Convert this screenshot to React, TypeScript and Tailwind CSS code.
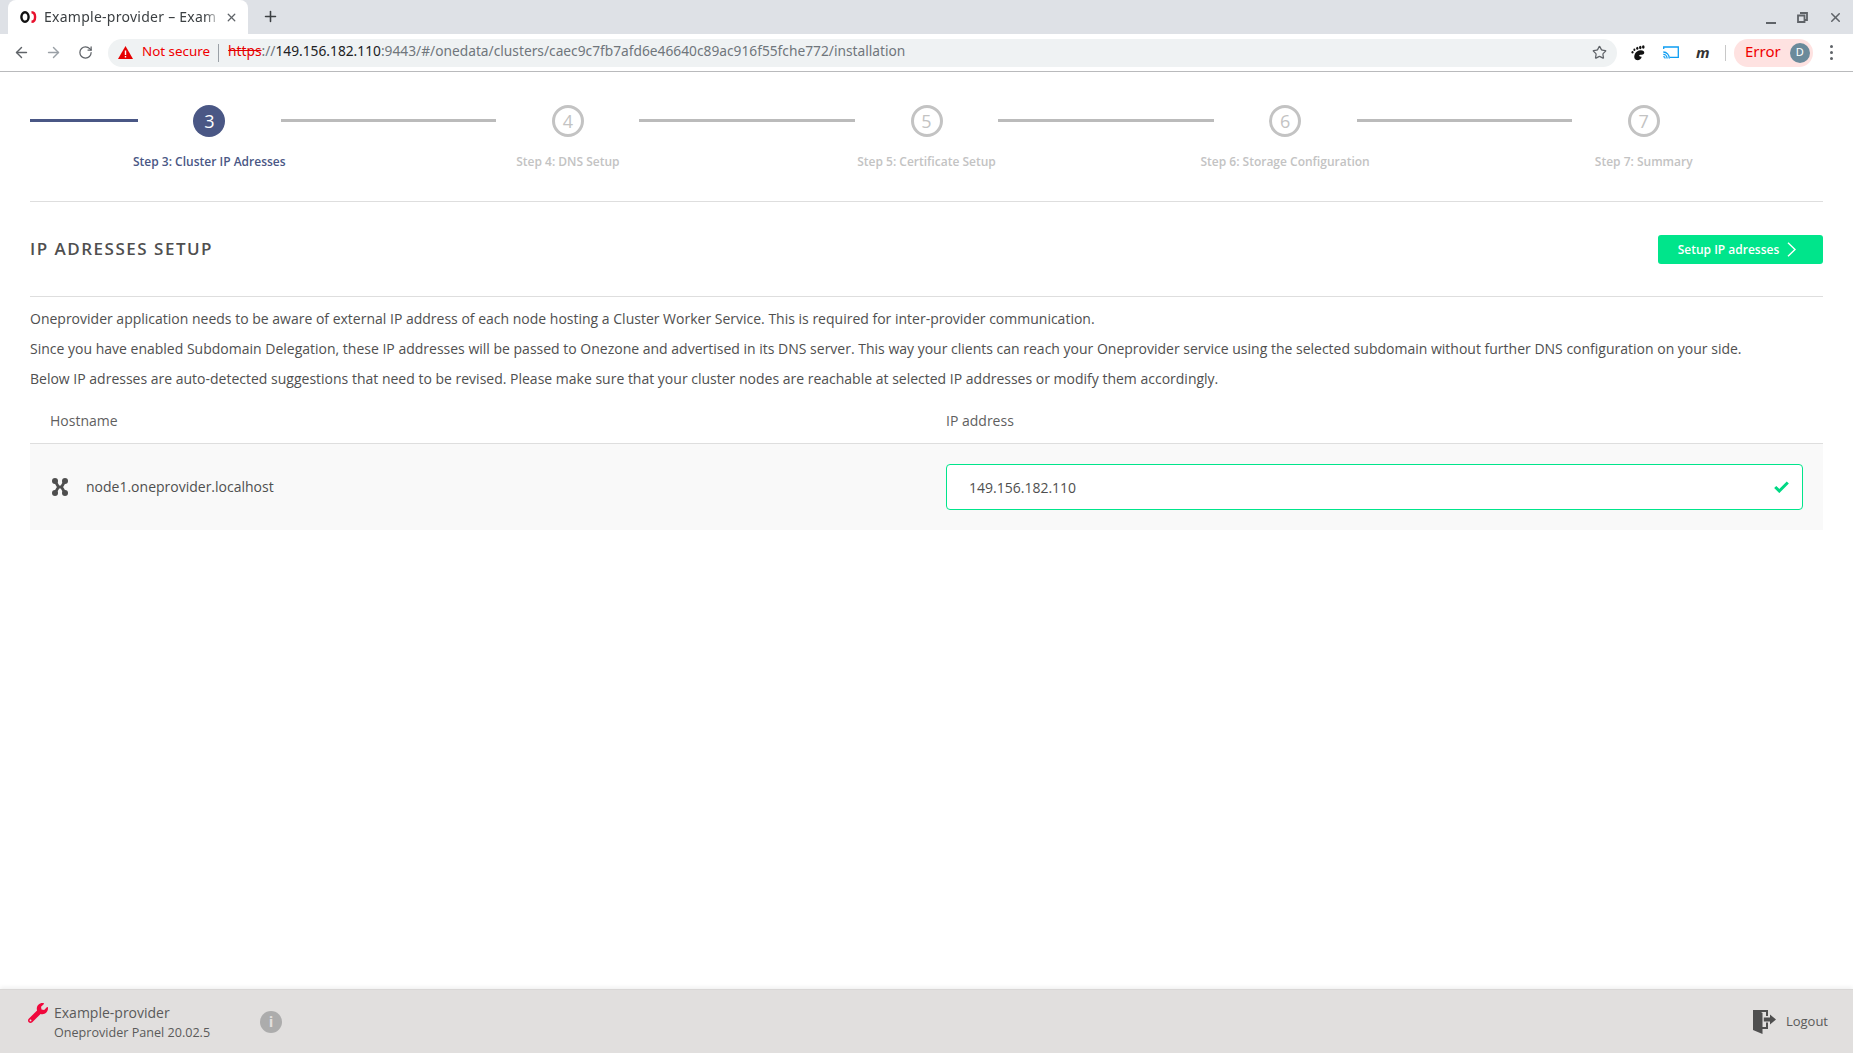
import React from "react";
import { ArrowLeft, ArrowRight, RotateCw, Star, X, Plus } from "lucide-react";
import { FaWrench } from "react-icons/fa";

const steps = [
  { n: 3, label: "Step 3: Cluster IP Adresses", active: true },
  { n: 4, label: "Step 4: DNS Setup" },
  { n: 5, label: "Step 5: Certificate Setup" },
  { n: 6, label: "Step 6: Storage Configuration" },
  { n: 7, label: "Step 7: Summary" },
];

function Step({ n, label, active, last }: { n: number; label: string; active?: boolean; last?: boolean }) {
  return (
    <div className="flex flex-col items-center">
      <div className="flex h-[32px] w-full items-center">
        <div className={active ? "h-[3px] flex-1 -translate-y-[1px] bg-[#4a5785]" : "h-[3px] flex-1 -translate-y-[1px] bg-[#bbbbbb]"} />
        <div className="flex w-[143px] justify-center">
          {active ? (
            <div className="flex h-[32px] w-[32px] items-center justify-center rounded-full bg-[#4a5785] text-[18px] text-white">{n}</div>
          ) : (
            <div className="flex h-[32px] w-[32px] items-center justify-center rounded-full border-[3px] border-[#c3c3c3] text-[18px] text-[#c3c3c3]">{n}</div>
          )}
        </div>
        <div className={last ? "h-[3px] flex-1" : "h-[3px] flex-1 -translate-y-[1px] bg-[#bbbbbb]"} />
      </div>
      <div className={active ? "mt-[16px] text-[12px] leading-[17px] font-semibold text-[#4a5785]" : "mt-[16px] text-[12px] leading-[17px] font-semibold text-[#c3c3c3]"}>{label}</div>
    </div>
  );
}

function Favicon() {
  return (
    <svg width="17" height="14" viewBox="0 0 17 14" fill="none">
      <ellipse cx="5" cy="7" rx="3.6" ry="4.8" stroke="#111" strokeWidth="2.4" />
      <path d="M11.5 2.2c2.6 0 3.6 2.2 3.6 4.8s-1 4.8-3.6 4.8" stroke="#e8112d" strokeWidth="2.4" />
    </svg>
  );
}

function Foot() {
  return (
    <svg width="14" height="16" viewBox="0 0 14 16" fill="#111">
      <path d="M6 6.500c2-1.400 5-1.500 6.500-.5 1.300 1 .9 3.200-.7 3.600-1.400.4-3.200.2-3.600 1-.4.800 1.200 1.300 2.500 1.100-.4 2.400-3 4-5.200 3.300C2.500 14.200 2.400 9.200 6 6.500z" />
      <ellipse cx="12.300" cy="2" rx="1.300" ry="1.700" />
      <ellipse cx="9.300" cy="2.500" rx="1.200" ry="1.700" />
      <ellipse cx="6.300" cy="3.300" rx="1.100" ry="1.500" />
      <ellipse cx="3.400" cy="4.800" rx="1" ry="1.300" />
      <ellipse cx="1.500" cy="7.200" rx="1" ry="1.200" />
    </svg>
  );
}

function Cast() {
  return (
    <svg width="16" height="13" viewBox="0 0 16 13" fill="none" stroke="#0d9df2" strokeWidth="1.3">
      <path d="M.7 3V1h14.600v10.400H7" />
      <path d="M.3 6c3.400 0 6 2.800 6 6.400M.3 8.400c2.200 0 3.800 1.800 3.800 4M.3 10.600c1 0 1.800.8 1.800 1.800" />
    </svg>
  );
}

function NodeIcon() {
  return (
    <svg width="16" height="18" viewBox="0 0 16 18" fill="#4f4f4f">
      <circle cx="3" cy="3" r="3" />
      <circle cx="13" cy="3" r="3" />
      <circle cx="3" cy="15" r="3" />
      <circle cx="13" cy="15" r="3" />
      <path d="M3 3 L6.500 9 L3 15 M13 3 L9.500 9 L13 15 M6.500 9 H9.500" stroke="#4f4f4f" strokeWidth="2.800" fill="none" />
    </svg>
  );
}

function LogoutIcon() {
  return (
    <svg width="23" height="24" viewBox="0 0 23 24" fill="#4f4f4f">
      <path d="M0 0H15V6H13V2H8L9.500 3V17H13V12.500H15V19H9.500V24L0 20Z" />
      <path d="M10.800 7.500H17V4.500L23 9.500L17 14.500V11.500H10.800Z" />
    </svg>
  );
}

export default function App() {
  return (
    <div className="flex h-[1053px] w-full flex-col overflow-hidden bg-white font-['Open_Sans',sans-serif] text-[#4f4f4f]">
      {/* tab strip */}
      <div className="flex h-[34px] items-end bg-[#dee1e6] font-['Noto_Sans',sans-serif]">
        <div className="ml-[8px] flex h-[34px] w-[240px] items-center rounded-t-[8px] bg-white pl-[12px]">
          <Favicon />
          <span className="ml-[7px] w-[178px] -translate-y-[1px] overflow-hidden text-[14px] tracking-[0.26px] whitespace-nowrap text-[#3c4043] [mask-image:linear-gradient(to_right,black_90%,transparent)]">Example-provider – Exam</span>
          <X size={13} strokeWidth={2.4} className="ml-[3px] text-[#5f6368]" />
        </div>
        <Plus size={17} strokeWidth={2.2} className="mb-[9px] ml-[14px] text-[#3c4043]" />
        <div className="mb-[9px] ml-auto flex items-center">
          <span className="h-[2px] w-[10px] translate-y-[5px] bg-[#5f6368]" />
          <svg width="11" height="11" viewBox="0 0 11 11" fill="none" stroke="#5f6368" strokeWidth="1.8" className="ml-[21px]">
            <path d="M3 1h7v7H8M1 3.500h6.500V10H1z" />
          </svg>
          <X size={15} strokeWidth={2.4} className="mr-[10px] ml-[20px] text-[#5f6368]" />
        </div>
      </div>
      {/* toolbar */}
      <div className="flex h-[38px] items-center border-b border-[#b9babc] bg-white font-['Noto_Sans',sans-serif]">
        <ArrowLeft size={17} strokeWidth={2} className="ml-[13px] text-[#5f6368]" />
        <ArrowRight size={17} strokeWidth={2} className="ml-[15px] text-[#9aa0a6]" />
        <RotateCw size={15} strokeWidth={2} className="ml-[16px] text-[#5f6368]" />
        <div className="ml-[15px] flex h-[28px] w-[1509px] items-center rounded-full bg-[#eff2f3] pl-[10px] text-[13.75px]">
          <svg width="15" height="13" viewBox="0 0 15 13">
            <path d="M7.500 0 15 13H0z" fill="#e60000" />
            <path d="M6.800 4.500h1.400v4.500H6.800zM6.800 10h1.400v1.400H6.800z" fill="#fff" />
          </svg>
          <span className="ml-[9px] -translate-y-[1px] text-[13.4px] text-[#f00000]">Not secure</span>
          <span className="mr-[9px] ml-[8px] h-[18px] w-px bg-[#9aa0a6]" />
          <div className="-translate-y-[1px] whitespace-nowrap">
            <span className="text-[#e60000] line-through">https</span>
            <span className="text-[#70767c]">://</span>
            <span className="text-[#202124]">149.156.182.110</span>
            <span className="text-[#70767c]">:9443/#/onedata/clusters/caec9c7fb7afd6e46640c89ac916f55fche772/installation</span>
          </div>
          <Star size={15} strokeWidth={2} className="mr-[10px] ml-auto text-[#5f6368]" />
        </div>
        <div className="ml-[14px]"><Foot /></div>
        <div className="ml-[18px]"><Cast /></div>
        <span className="ml-[17px] w-[16px] text-[15px] font-bold text-[#333] italic">m</span>
        <span className="ml-[13px] h-[16px] w-px bg-[#c8c8c8]" />
        <div className="ml-[8px] flex h-[28px] w-[79px] items-center rounded-full bg-[#fee2e1] pl-[11px] text-[15px] text-[#f00000]">
          <span className="-translate-y-[1px]">Error</span>
          <span className="ml-[9px] flex h-[20px] w-[20px] items-center justify-center rounded-full bg-[#6b8a9b] text-[11px] text-white">D</span>
        </div>
        <div className="ml-[17px] flex flex-col gap-[3px]">
          <span className="h-[3px] w-[3px] rounded-full bg-[#5f6368]" />
          <span className="h-[3px] w-[3px] rounded-full bg-[#5f6368]" />
          <span className="h-[3px] w-[3px] rounded-full bg-[#5f6368]" />
        </div>
      </div>
      {/* content */}
      <main className="flex flex-1 flex-col px-[30px]">
        <div className="grid h-[130px] grid-cols-5 border-b border-[#dedede] pt-[33px]">
          {steps.map((s, i) => (
            <Step key={s.n} n={s.n} label={s.label} active={s.active} last={i === steps.length - 1} />
          ))}
        </div>
        <div className="flex h-[95px] items-center justify-between border-b border-[#dedede]">
          <h1 className="text-[17px] font-semibold tracking-[1.5px] text-[#4f4f4f]">IP ADRESSES SETUP</h1>
          <button className="flex h-[29px] w-[165px] items-center justify-center gap-[8px] rounded-[3px] bg-[#00e58b] pr-[7px] text-[12px] font-semibold text-white">
            <span className="translate-y-[1px]">Setup IP adresses</span>
            <svg width="9" height="15" viewBox="0 0 9 15" fill="none" stroke="#fff" strokeWidth="1.4"><path d="M1 .700 8 7.500 1 14.300" /></svg>
          </button>
        </div>
        <div className="pt-[7px] text-[14px] leading-[30px] text-[#4f4f4f]">
          <p>Oneprovider application needs to be aware of external IP address of each node hosting a Cluster Worker Service. This is required for inter-provider communication.</p>
          <p>Since you have enabled Subdomain Delegation, these IP addresses will be passed to Onezone and advertised in its DNS server. This way your clients can reach your Oneprovider service using the selected subdomain without further DNS configuration on your side.</p>
          <p>Below IP adresses are auto-detected suggestions that need to be revised. Please make sure that your cluster nodes are reachable at selected IP addresses or modify them accordingly.</p>
        </div>
        <div className="mt-[12px] flex h-[38px] items-start border-b border-[#dedede] pt-[5px] text-[14px] leading-[20px] text-[#5f5f5f]">
          <div className="w-[916px] pl-[20px]">Hostname</div>
          <div>IP address</div>
        </div>
        <div className="flex h-[86px] items-center bg-[#f9f9f9]">
          <div className="flex w-[916px] items-center pl-[22px] text-[14px]">
            <NodeIcon />
            <span className="ml-[18px] -translate-y-[1px]">node1.oneprovider.localhost</span>
          </div>
          <div className="flex h-[46px] w-[857px] items-center justify-between rounded-[4px] border-[1.5px] border-[#00e58b] bg-white pr-[13px] pl-[22px] text-[14px]">
            <span>149.156.182.110</span>
            <svg width="15" height="12" viewBox="0 0 15 12" fill="none" stroke="#00d884" strokeWidth="3"><path d="M1.200 6 5.300 10 13.800 1.500" /></svg>
          </div>
        </div>
      </main>
      {/* footer */}
      <footer className="flex h-[64px] items-center border-t border-[#d8d6d5] bg-[#e1dfde] pr-[25px] pl-[28px] shadow-[0_-2px_4px_rgba(0,0,0,0.06)]">
        <FaWrench size={20} className="mb-[18px] text-[#f0083c]" />
        <div className="ml-[6px] pt-[3px] text-[#5a5a5a]">
          <div className="text-[14px] leading-[20px]">Example-provider</div>
          <div className="text-[12.6px] leading-[20px]">Oneprovider Panel 20.02.5</div>
        </div>
        <span className="ml-[50px] flex h-[22px] w-[22px] items-center justify-center rounded-full bg-[#acacac] text-[15px] leading-none font-bold text-[#e1dfde]">i</span>
        <div className="ml-auto flex items-center">
          <LogoutIcon />
          <span className="ml-[10px] text-[13px] text-[#5a5a5a]">Logout</span>
        </div>
      </footer>
    </div>
  );
}
